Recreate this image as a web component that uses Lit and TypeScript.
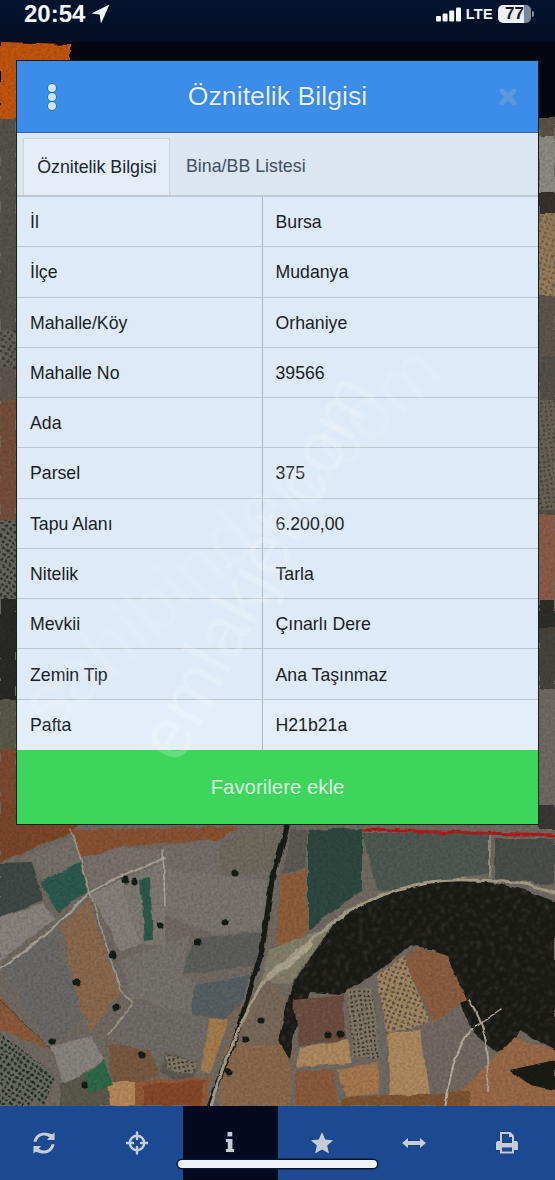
import { LitElement, html, css, svg } from "lit";
import { customElement } from "lit/decorators.js";

const rows: [string, string][] = [
  ["İl", "Bursa"],
  ["İlçe", "Mudanya"],
  ["Mahalle/Köy", "Orhaniye"],
  ["Mahalle No", "39566"],
  ["Ada", ""],
  ["Parsel", "375"],
  ["Tapu Alanı", "6.200,00"],
  ["Nitelik", "Tarla"],
  ["Mevkii", "Çınarlı Dere"],
  ["Zemin Tip", "Ana Taşınmaz"],
  ["Pafta", "H21b21a"],
];

const polys: [string, string][] = [
  // top area and side strips
  ["0,42 70,44 70,118 0,118", "#c4540f"],
  ["0,118 16,118 16,330 0,330", "#57534d"],
  ["0,330 16,330 16,400 0,400", "#5e574f"],
  ["0,400 16,400 16,520 0,520", "#76503c"],
  ["0,520 16,520 16,600 0,600", "#5c5a56"],
  ["0,600 16,600 16,700 0,700", "#2c2c27"],
  ["0,700 16,700 16,750 0,750", "#5a5a48"],
  ["0,750 16,750 16,830 0,830", "#7f4a32"],
  ["539,117 555,117 555,137 539,137", "#5c5245"],
  ["539,137 555,137 555,193 539,193", "#8f8b87"],
  ["539,193 555,193 555,213 539,213", "#37332f"],
  ["539,213 555,213 555,295 539,295", "#8b7453"],
  ["539,295 555,295 555,356 539,356", "#5e564e"],
  ["539,356 555,356 555,515 539,515", "#55514a"],
  ["539,515 555,515 555,600 539,600", "#8d5b48"],
  ["539,600 555,600 555,627 539,627", "#2f2d29"],
  ["539,627 555,627 555,690 539,690", "#46443a"],
  ["539,690 555,690 555,805 539,805", "#6f6a64"],
  ["539,805 555,805 555,830 539,830", "#3a3835"],
  // lower map: left
  ["0,800 80,824 73,832 0,862", "#7c462a"],
  ["73,830 240,826 217,840 120,847 82,858", "#8a5330"],
  ["20,858 73,836 90,890 45,882 32,862", "#77716a"],
  ["82,858 120,847 160,850 163,862 92,890", "#7a736c"],
  ["163,846 217,840 285,830 280,875 220,880 165,870", "#76706a"],
  ["220,840 285,830 272,870 220,878", "#6f6a5e"],
  ["0,863 32,862 43,900 0,917", "#3f4a44"],
  ["40,882 80,863 88,890 58,913", "#2e5a50"],
  ["0,917 43,903 55,920 0,960", "#8a8480"],
  ["62,927 88,900 120,993 90,1033 78,1000", "#8b6a50"],
  ["0,967 55,933 83,1017 50,1047", "#6c6b67"],
  ["0,997 50,1050 0,1030", "#8d5a3e"],
  ["90,893 122,880 140,945 120,950", "#87817b"],
  ["122,880 165,862 165,945 140,945", "#807a74"],
  ["140,880 150,878 153,940 145,941", "#2d5a48"],
  ["165,880 193,878 193,912 168,912", "#7a6448"],
  ["165,870 268,880 262,930 215,935 165,915", "#7c7670"],
  ["195,938 262,932 258,965 182,975", "#5e5f5c"],
  ["120,960 190,935 182,975 195,985 245,975 225,1015 190,1020 145,1000 130,1000", "#78736e"],
  ["195,985 250,975 235,1020 190,1022", "#596064"],
  ["133,1003 225,1020 205,1060 150,1050 110,1040", "#726d67"],
  ["50,1047 90,1036 105,1060 65,1085", "#8a8581"],
  ["110,1045 150,1050 160,1075 112,1090", "#7a5a43"],
  ["165,1053 198,1062 190,1090 160,1072", "#5f5a52"],
  ["210,1018 228,1020 210,1075 200,1072", "#a67d4f"],
  ["112,1082 210,1078 205,1106 112,1106", "#945a35"],
  ["144,1085 205,1080 200,1106 144,1106", "#87492a"],
  ["107,1082 135,1082 135,1106 107,1106", "#b8895a"],
  ["60,1085 105,1065 110,1106 60,1106", "#5b5a4e"],
  ["85,1075 105,1060 112,1085 88,1092", "#2f6b48"],
  // lower map: centre
  ["280,877 307,870 307,930 275,963", "#8f5f3a"],
  ["228,1015 270,980 290,1000 296,1045 288,1106 222,1106", "#7a6a5a"],
  ["225,1045 290,1045 290,1106 220,1106", "#8b6a4e"],
  ["290,830 308,830 305,868 283,875", "#5f5a54"],
  // lower map: right
  ["308,830 362,828 362,890 308,930", "#2f4a41"],
  ["362,833 490,833 490,873 377,892", "#4f5a52"],
  ["495,838 555,838 555,885 495,878", "#4b504c"],
  ["268,950 333,925 290,985 262,980", "#85806a"],
];

const darkMass =
  "M333,925 C360,895 420,880 467,881 C500,882 530,890 555,902 L555,1050 L520,1030 L505,1060 L470,1030 L455,985 L435,950 L410,945 L378,972 L340,995 L310,993 L295,1030 L290,1060 L278,1040 L292,985 Z";

const overMass: [string, string][] = [
  ["403,957 420,947 447,957 467,1000 433,1023", "#8c5f3f"],
  ["293,1000 343,995 345,1040 300,1045", "#6e5040"],
  ["387,1033 420,1030 430,1093 390,1097", "#b08a5e"],
  ["300,1047 347,1040 353,1063 297,1067", "#b08a60"],
  ["337,1070 377,1063 380,1093 347,1097", "#a8794f"],
  ["295,1070 335,1070 338,1106 295,1106", "#8c5c3c"],
  ["447,1106 513,1037 555,1050 555,1106", "#9a6a4a"],
  ["510,1070 555,1060 555,1090 530,1085", "#1b1a17"],
  ["340,1097 470,1092 470,1106 340,1106", "#7f5433"],
];

@customElement("app-root")
export class AppRoot extends LitElement {
  static styles = css`
    :host {
      display: block;
      position: relative;
      width: 555px;
      height: 1180px;
      overflow: hidden;
      font-family: "Liberation Sans", Arial, sans-serif;
      background: #6d665e;
    }
    .map {
      position: absolute;
      inset: 0;
      width: 555px;
      height: 1180px;
    }
    .page {
      position: relative;
      display: flex;
      flex-direction: column;
      height: 1180px;
    }
    .status {
      height: 42px;
      flex: none;
      background: linear-gradient(#04142f, #030e24);
      display: flex;
      align-items: flex-start;
      justify-content: space-between;
      padding: 0 24px;
      box-sizing: border-box;
      color: #f4f6f8;
    }
    .clock {
      display: flex;
      align-items: center;
      gap: 6px;
      font-weight: 700;
      font-size: 24px;
      height: 27px;
    }
    .sys {
      display: flex;
      align-items: center;
      gap: 5px;
      height: 28px;
    }
    .lte {
      font-weight: 700;
      font-size: 14.5px;
      letter-spacing: 0.3px;
    }
    .batt {
      width: 33px;
      height: 18px;
      border-radius: 5px;
      background: linear-gradient(90deg, #eef0f2 78%, #7d8797 78%);
      color: #101a2c;
      font-weight: 700;
      font-size: 17px;
      line-height: 18px;
      text-align: center;
      position: relative;
    }
    .batt::after {
      content: "";
      position: absolute;
      right: -3px;
      top: 6px;
      width: 2px;
      height: 6px;
      border-radius: 0 2px 2px 0;
      background: #8a93a1;
    }
    main {
      flex: 1;
      min-height: 0;
      padding: 18px 16px 0;
    }
    .modal {
      height: 765px;
      box-sizing: border-box;
      width: 523px;
      border: 1px solid #16231c;
      display: flex;
      flex-direction: column;
      position: relative;
      background: #dfeaf7;
    }
    .head {
      height: 72px;
      flex: none;
      background: #3c8dea;
      border-bottom: 1px solid #2a68ad;
      box-sizing: border-box;
      display: flex;
      align-items: center;
      justify-content: space-between;
      padding: 0 21px 0 31px;
      position: relative;
    }
    .title {
      position: absolute;
      left: 0;
      right: 0;
      text-align: center;
      color: #e4f2fd;
      font-size: 26.7px;
      text-shadow: 0 0 1px #1e5390;
    }
    .dots {
      display: flex;
      flex-direction: column;
      gap: 1px;
    }
    .dots i {
      width: 8px;
      height: 8px;
      border-radius: 50%;
      background: #c9e9fb;
      box-shadow: 0 0 0 0.5px #1d4f8a;
    }
    .tabs {
      height: 64px;
      flex: none;
      box-sizing: border-box;
      padding: 5px 0 0 6px;
      display: flex;
      background: #dce6f1;
      border-bottom: 2px solid #c0c9d2;
      font-size: 17.8px;
    }
    .tab {
      display: flex;
      align-items: center;
      box-sizing: border-box;
      height: 57px;
    }
    .tab.on {
      width: 147px;
      justify-content: center;
      background: #e5eef8;
      border: 1px solid #ccd4dc;
      border-bottom: none;
      color: #20262e;
      padding-left: 1px;
    }
    .tab.off {
      padding-left: 16px;
      color: #3f4f66;
    }
    .list {
      flex: 1;
      min-height: 0;
      display: grid;
      grid-auto-rows: 1fr;
    }
    .row {
      display: grid;
      grid-template-columns: 245px 1fr;
      border-bottom: 1px solid #bcc5ce;
      color: #1b1e22;
      font-size: 17.7px;
      background: #deeaf8;
    }
    .row:last-child {
      border-bottom: none;
      background: #e4eefa;
    }
    .cell {
      display: flex;
      align-items: center;
      padding: 2px 0 0 13px;
      box-sizing: border-box;
    }
    .cell + .cell {
      border-left: 1px solid #adb7c1;
      padding-left: 12.5px;
    }
    .wm {
      position: absolute;
      width: 0;
      transform-origin: left bottom;
      color: rgba(255, 255, 255, 0.2);
      white-space: nowrap;
      pointer-events: none;
    }
    .wm.a {
      left: 176px;
      top: 630px;
      font-size: 72px;
      transform: rotate(-62deg);
    }
    .wm.b {
      left: 45px;
      top: 598px;
      font-size: 76px;
      transform: rotate(-42deg);
      color: rgba(255, 255, 255, 0.12);
    }
    .fav {
      height: 74px;
      flex: none;
      background: #3dd55c;
      display: flex;
      align-items: center;
      justify-content: center;
      color: #dcf5e0;
      font-size: 20.4px;
      position: relative;
    }
    nav {
      margin-top: auto;
      height: 74px;
      flex: none;
      background: #1c4a92;
      display: grid;
      grid-template-columns: repeat(6, 1fr);
      position: relative;
    }
    .btn {
      display: flex;
      justify-content: center;
      padding-top: 25px;
      box-sizing: border-box;
      color: #c4ccd6;
    }
    .btn.on {
      background: #030a20;
      margin-left: -2px;
    }
    .btn svg {
      display: block;
      stroke: #12305f;
      stroke-width: 0.6;
      paint-order: stroke;
      margin-right: 4px;
    }
    .btn.on svg {
      margin-right: 0;
    }
    .home {
      position: absolute;
      left: 178px;
      top: 54px;
      width: 199px;
      height: 8px;
      border-radius: 4px;
      background: #eef1f5;
      box-shadow: 0 0 0 1.5px #07152f;
    }
  `;

  private defs() {
    return svg`<filter id="grain" x="0" y="0" width="100%" height="100%">
        <feTurbulence type="fractalNoise" baseFrequency="0.35" numOctaves="3" seed="4"/>
        <feColorMatrix values="0 0 0 0 0  0 0 0 0 0  0 0 0 0 0  0.9 0 0 0 -0.28"/>
      </filter>
      <filter id="speck" x="0" y="0" width="100%" height="100%">
        <feTurbulence type="fractalNoise" baseFrequency="0.22" numOctaves="2" seed="9"/>
        <feColorMatrix values="0 0 0 0 0.42  0 0 0 0 0.38  0 0 0 0 0.32  2.6 0 0 0 -1.35"/>
        <feGaussianBlur stdDeviation="0.8"/>
      </filter>
      <filter id="soft" x="0" y="0" width="100%" height="100%">
        <feTurbulence type="fractalNoise" baseFrequency="0.06" numOctaves="3" seed="2" result="n"/>
        <feDisplacementMap in="SourceGraphic" in2="n" scale="5" xChannelSelector="R" yChannelSelector="G"/>
        <feGaussianBlur stdDeviation="0.7"/>
      </filter>
      <clipPath id="massClip"><path d=${darkMass}/></clipPath>
      <pattern id="olive" width="5" height="5" patternUnits="userSpaceOnUse" patternTransform="rotate(20)">
        <rect width="5" height="5" fill="#a58a68"/>
        <circle cx="2.5" cy="2.5" r="1.2" fill="#4a3e33"/>
      </pattern>
      <pattern id="olive2" width="4.5" height="4.5" patternUnits="userSpaceOnUse" patternTransform="rotate(-8)">
        <rect width="4.5" height="4.5" fill="#857a66"/>
        <circle cx="2" cy="2" r="1.1" fill="#34332b"/>
      </pattern>
      <pattern id="grove" width="5" height="5" patternUnits="userSpaceOnUse" patternTransform="rotate(35)">
        <rect width="5" height="5" fill="#6c6e62"/>
        <circle cx="2.5" cy="2.5" r="1.6" fill="#22281f"/>
      </pattern>`;
  }

  private map() {
    const tree = (x: number, y: number, r = 3.6) =>
      svg`<circle cx=${x} cy=${y} r=${r} fill="#191a16"/>`;
    const line = (d: string, c: string, w: number) =>
      svg`<path d=${d} fill="none" stroke=${c} stroke-width=${w} stroke-linecap="round" stroke-linejoin="round"/>`;
    return svg`<svg class="map" viewBox="0 0 555 1180" aria-hidden="true">
      <defs>${this.defs()}</defs>
      <rect x="0" y="42" width="555" height="80" fill="#05070f"/>
      <rect x="0" y="118" width="555" height="1000" fill="#726b63"/>
      <g filter="url(#soft)">
        ${polys.map(([p, c]) => svg`<polygon points=${p} fill=${c}/>`)}
        <polygon points="0,1033 57,1077 43,1106 0,1067" fill="url(#grove)"/>
        <polygon points="0,1040 45,1075 30,1106 0,1106" fill="url(#grove)"/>
        <polygon points="0,330 16,330 16,368 0,368" fill="url(#grove)" opacity=".6"/>
        <polygon points="0,520 16,520 16,600 0,600" fill="url(#grove)" opacity=".8"/>
        <polygon points="539,213 555,213 555,295 539,295" fill="url(#olive)" opacity=".5"/>
        <polygon points="539,400 555,400 555,510 539,510" fill="url(#olive2)" opacity=".45"/>
        <polygon points="165,1055 198,1062 192,1074 168,1070" fill="url(#olive2)"/>
        <path d=${darkMass} fill="#1b1b17"/>
        ${overMass.map(([p, c]) => svg`<polygon points=${p} fill=${c}/>`)}
        <polygon points="377,977 403,955 430,1023 387,1033" fill="url(#olive)"/>
        <polygon points="347,990 373,987 380,1060 353,1057" fill="url(#olive2)"/>
        ${line("M287,828 L272,880 L262,950 L235,1040 L208,1106", "#1c1c18", 5)}
        ${line("M555,892 C520,880 490,880 467,880 C420,878 370,895 333,922 C300,950 280,965 267,978 C245,1010 225,1060 210,1106", "#a9a089", 3)}
        ${line("M268,977 C285,968 300,955 310,945", "#b0a78f", 5)}
        ${line("M0,968 C30,950 60,925 88,893 C110,880 140,870 165,857", "#a9a397", 2)}
        ${line("M72,830 L88,885 L120,990 L133,1003 L108,1035", "#a39b8d", 1.5)}
        ${line("M163,850 L165,905", "#b0aaa0", 1.5)}
        ${line("M490,835 L490,877", "#8f8d7d", 2)}
        ${line("M0,1000 L50,1048", "#45423c", 1)}
        ${line("M363,830 L555,835", "#b01f1e", 3)}
        ${line("M470,1030 C450,1060 450,1085 445,1106", "#b8b0a0", 2)}
        ${line("M500,1010 L470,1030", "#b8b0a0", 1.5)}
        ${line("M470,1000 C488,1030 490,1060 488,1090", "#b0a89a", 2)}
        ${[
          [125, 880], [135, 882], [235, 873], [273, 877], [113, 955], [117, 1008],
          [77, 983], [52, 1041], [160, 925], [225, 923], [198, 942], [142, 1055],
          [85, 1085], [262, 1020], [245, 1040], [228, 1072], [328, 1035], [340, 1035],
        ].map(([x, y]) => tree(x, y))}
      </g>
      <g clip-path="url(#massClip)">
        <rect x="270" y="870" width="285" height="200" filter="url(#speck)" opacity=".3"/>
      </g>
      <rect x="0" y="42" width="555" height="1064" filter="url(#grain)" opacity=".3"/>
    </svg>`;
  }

  render() {
    return html`
      ${this.map()}
      <div class="page">
        <div class="status">
          <div class="clock">
            20:54
            <svg width="19" height="20" viewBox="0 0 19 20"><path d="M18.5 0.5 L0.5 9.5 L8.6 10.6 L10 19.5 Z" fill="#f4f6f8"/></svg>
          </div>
          <div class="sys">
            <svg width="25" height="15" viewBox="0 0 25 15">
              <rect x="0" y="9" width="5" height="5.5" rx="1" fill="#f4f6f8"/>
              <rect x="6.6" y="6.5" width="5" height="8" rx="1" fill="#f4f6f8"/>
              <rect x="13.2" y="3.5" width="5" height="11" rx="1" fill="#f4f6f8"/>
              <rect x="20" y="0.5" width="5" height="14" rx="1" fill="#f4f6f8"/>
            </svg>
            <span class="lte">LTE</span>
            <span class="batt">77</span>
          </div>
        </div>
        <main>
          <div class="modal">
            <div class="head">
              <div class="dots"><i></i><i></i><i></i></div>
              <div class="title">Öznitelik Bilgisi</div>
              <svg width="18" height="18" viewBox="0 0 18 18">
                <path d="M3 3 L15 15 M15 3 L3 15" stroke="#5f99d8" stroke-width="4.6" stroke-linecap="round"/>
              </svg>
            </div>
            <div class="tabs">
              <div class="tab on">Öznitelik Bilgisi</div>
              <div class="tab off">Bina/BB Listesi</div>
            </div>
            <div class="list">
              ${rows.map(
                ([k, v]) => html`<div class="row">
                  <div class="cell">${k}</div>
                  <div class="cell">${v}</div>
                </div>`
              )}
            </div>
            <div class="fav">Favorilere ekle</div>
            <div class="wm a">emlakjet.com</div>
            <div class="wm b">sahibinden.com</div>
          </div>
        </main>
        <nav>
          <div class="btn">
            <svg width="24" height="24" viewBox="0 0 24 24" fill="currentColor">
              <path d="M20.4 3.3 L22.6 1.2 V9 H14.8 L17.2 6.6 C15.8 5.3 14 4.6 12.1 4.6 C8.4 4.6 5.3 7.2 4.6 10.8 H1.4 C2.2 5.4 6.7 1.4 12.1 1.4 C15.2 1.4 18.2 2.7 20.4 3.3 Z"/>
              <path d="M3.6 20.7 L1.4 22.8 V15 H9.2 L6.8 17.4 C8.2 18.7 10 19.4 11.9 19.4 C15.6 19.4 18.7 16.8 19.4 13.2 H22.6 C21.8 18.6 17.3 22.6 11.9 22.6 C8.8 22.6 5.8 21.3 3.6 20.7 Z"/>
            </svg>
          </div>
          <div class="btn">
            <svg width="22" height="24" viewBox="0 0 22 24" fill="none" style="stroke:currentColor;stroke-width:2.4">
              <circle cx="11" cy="12" r="7.2"/>
              <path d="M11 1.5 V8 M11 16 V22.5 M0.5 12 H7 M15 12 H21.5" stroke-linecap="round"/>
            </svg>
          </div>
          <div class="btn on">
            <svg width="10" height="22" viewBox="0 0 10 22" fill="currentColor">
              <rect x="2.6" y="1" width="4.6" height="4.4"/>
              <path d="M1 8 H7.4 V18 H9 V21 H1 V18 H2.8 V11 H1 Z"/>
            </svg>
          </div>
          <div class="btn">
            <svg width="24" height="24" viewBox="0 0 24 24" fill="currentColor">
              <path d="M12 1 L15.3 8.4 L23.2 9.2 L17.2 14.6 L19 22.6 L12 18.4 L5 22.6 L6.8 14.6 L0.8 9.2 L8.7 8.4 Z"/>
            </svg>
          </div>
          <div class="btn">
            <svg width="26" height="24" viewBox="0 0 26 24" fill="currentColor">
              <path d="M1 12 L7 7 V10 H19 V7 L25 12 L19 17 V14 H7 V17 Z"/>
            </svg>
          </div>
          <div class="btn">
            <svg width="24" height="24" viewBox="0 0 24 24" fill="currentColor" fill-rule="evenodd">
              <path d="M5 1 H15.5 L19 4.5 V10 H21 C22.4 10 23 11 23 12 V19 H19 V22.5 H5 V19 H1 V12 C1 11 1.6 10 3 10 H5 Z M7 3 V12 H17 V6 H14 V3 Z M7 16.5 V20.5 H17 V16.5 Z"/>
            </svg>
          </div>
          <div class="home"></div>
        </nav>
      </div>
    `;
  }
}
